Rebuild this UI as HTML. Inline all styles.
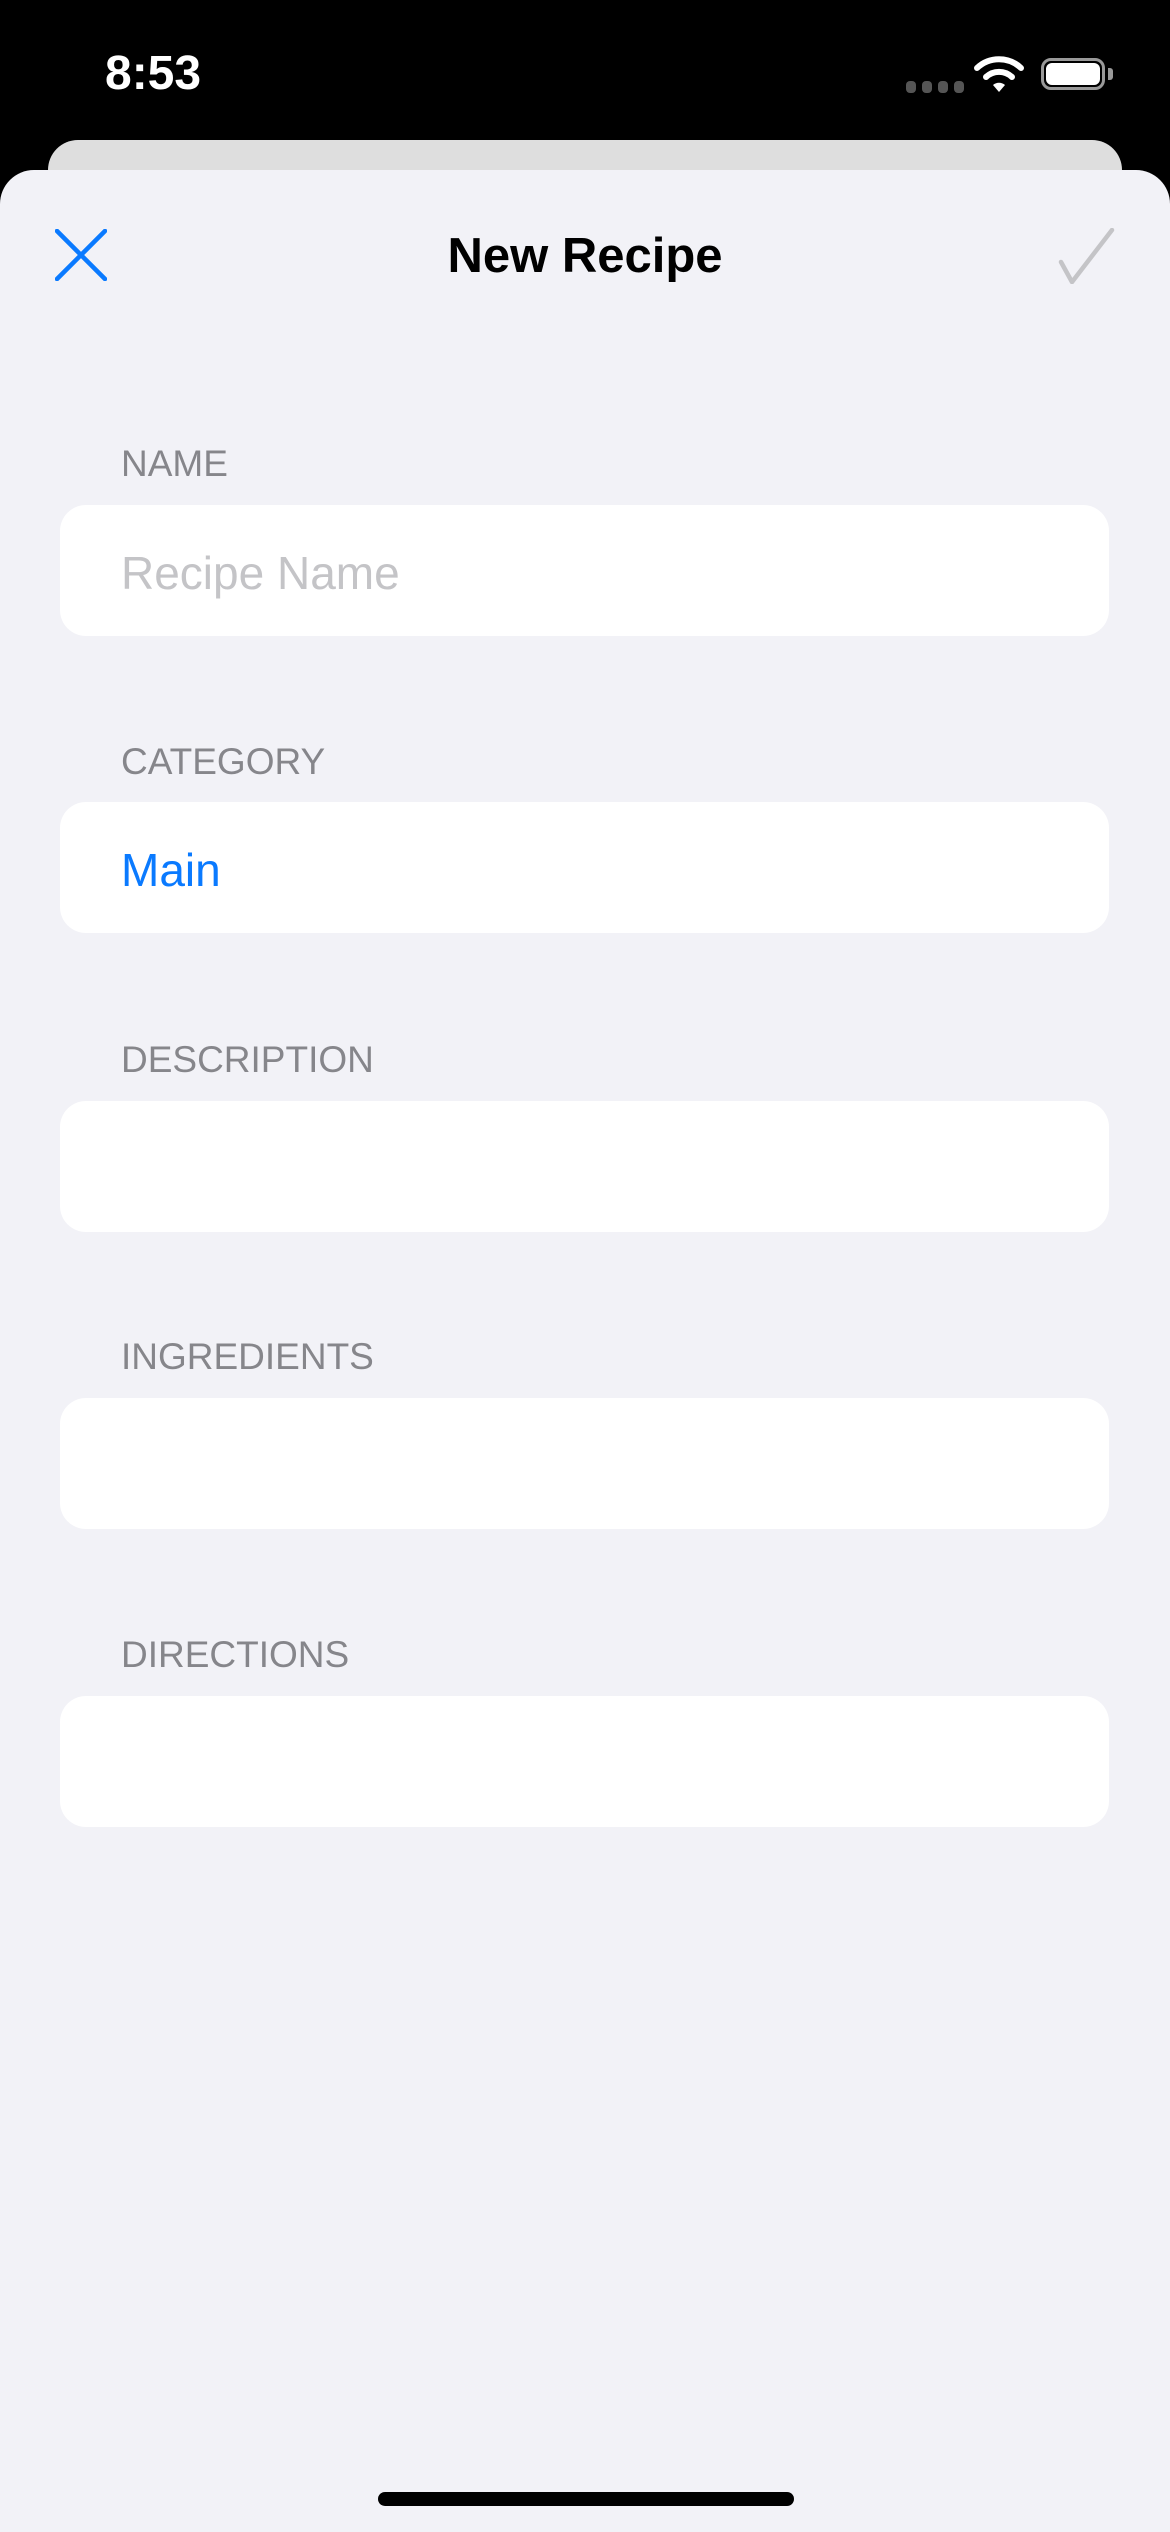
<!DOCTYPE html>
<html><head><style>
body{margin:0;width:1170px;height:2532px;background:#000;position:relative;overflow:hidden;font-family:"Liberation Sans",sans-serif}
.abs{position:absolute}
.sheet{left:0;top:170px;width:1170px;height:2362px;background:#f2f2f7;border-radius:34px 34px 0 0}
.back{left:48px;top:140px;width:1074px;height:80px;background:#dedede;border-radius:30px}
.lab{left:121px;font-size:37px;color:#86868b;line-height:40px}
.field{left:60px;width:1049px;height:131px;background:#fff;border-radius:26px}
.ft{position:absolute;left:61px;top:3px;line-height:131px;font-size:46px}
</style></head><body>
<div class="abs" style="left:105px;top:44px;color:#fff;font-size:48px;font-weight:bold;line-height:60px">8:53</div>
<div class="abs" style="left:906px;top:80px;width:58px;height:12px">
<svg width="58" height="12"><g fill="#555"><rect x="0" y="0" width="10" height="12" rx="4"/><rect x="16" y="0" width="10" height="12" rx="4"/><rect x="32" y="0" width="10" height="12" rx="4"/><rect x="48" y="0" width="10" height="12" rx="4"/></g></svg></div>
<svg class="abs" style="left:974px;top:54px" width="50" height="40" viewBox="0 0 50 40"><path d="M3 14 A32 32 0 0 1 47 14" stroke="#fff" stroke-width="6" fill="none" stroke-linecap="round"/><path d="M12 23 A19 19 0 0 1 38 23" stroke="#fff" stroke-width="6" fill="none" stroke-linecap="round"/><path d="M19 31 L25 38 L31 31 A9 9 0 0 0 19 31Z" fill="#fff"/></svg>
<div class="abs" style="left:1041px;top:58px;width:64px;height:32px;border:3px solid #999;border-radius:10px;box-sizing:border-box"></div>
<div class="abs" style="left:1046px;top:63px;width:54px;height:22px;background:#fff;border-radius:6px"></div>
<div class="abs" style="left:1108px;top:68px;width:5px;height:12px;background:#999;border-radius:0 3px 3px 0"></div>
<div class="abs back"></div>
<div class="abs sheet"></div>
<svg class="abs" style="left:55px;top:229px" width="52" height="52"><path d="M2 2 L50 50 M50 2 L2 50" stroke="#0a7aff" stroke-width="4.5" stroke-linecap="round"/></svg>
<svg class="abs" style="left:1058px;top:228px" width="58" height="56"><path d="M3 34 L14 54 L54 2" stroke="#c4c4c7" stroke-width="4.5" fill="none" stroke-linecap="round" stroke-linejoin="round"/></svg>
<div class="abs" style="left:0;width:1170px;top:223px;text-align:center;font-size:49px;font-weight:bold;line-height:66px;color:#000">New Recipe</div>
<div class="abs lab" style="top:444px">NAME</div>
<div class="abs field" style="top:505px"><span class="ft" style="color:#c4c4c7">Recipe Name</span></div>
<div class="abs lab" style="top:742px">CATEGORY</div>
<div class="abs field" style="top:802px"><span class="ft" style="color:#0a7aff">Main</span></div>
<div class="abs lab" style="top:1040px">DESCRIPTION</div>
<div class="abs field" style="top:1101px"></div>
<div class="abs lab" style="top:1337px">INGREDIENTS</div>
<div class="abs field" style="top:1398px"></div>
<div class="abs lab" style="top:1635px">DIRECTIONS</div>
<div class="abs field" style="top:1696px"></div>
<div class="abs" style="left:378px;top:2492px;width:416px;height:14px;background:#000;border-radius:7px"></div>
</body></html>
